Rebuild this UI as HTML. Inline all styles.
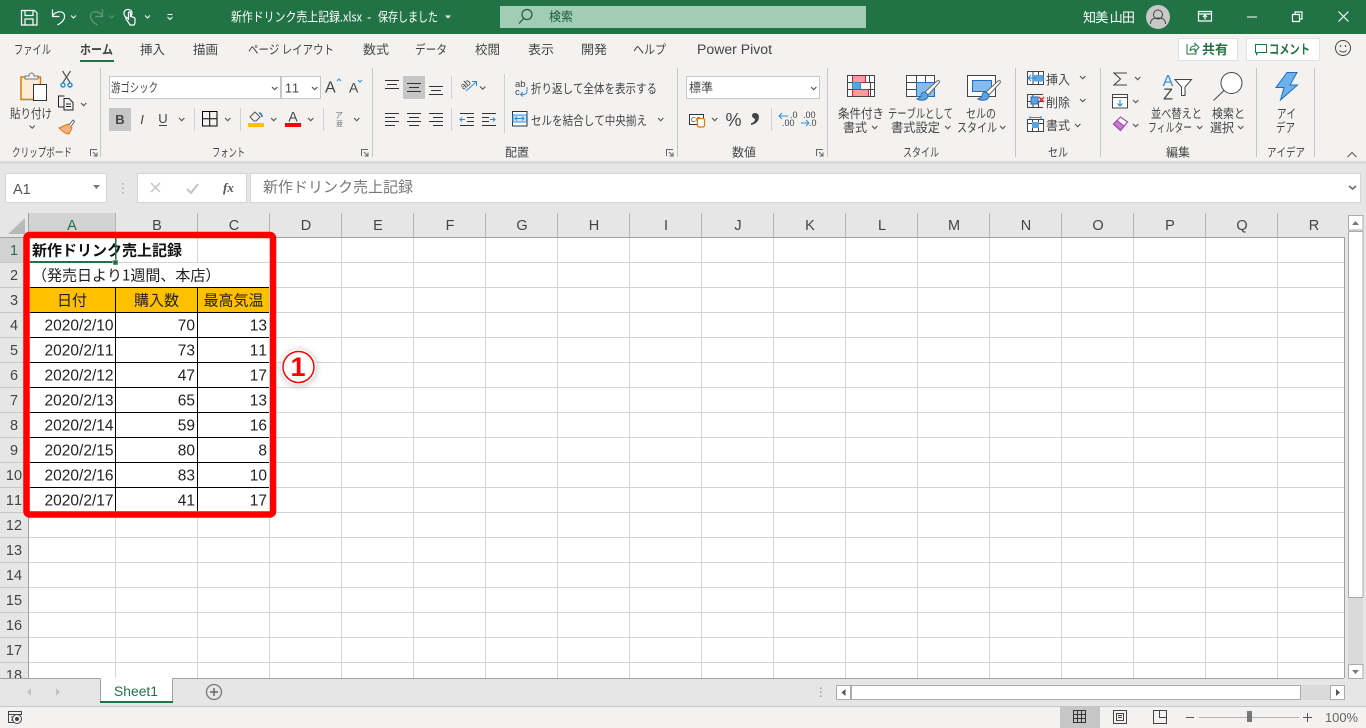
<!DOCTYPE html>
<html lang="ja"><head><meta charset="utf-8"><title>新作ドリンク売上記録.xlsx - Excel</title>
<style>
html,body{margin:0;padding:0;width:1366px;height:728px;overflow:hidden;background:#fff}
svg{display:block}
text{font-family:"Liberation Sans","Noto Sans CJK JP",sans-serif;fill:#444;font-size:12px;font-kerning:none}
.j{font-family:"Noto Sans CJK JP","Liberation Sans",sans-serif;font-size:12.5px}
.w{fill:#fff}
.c{font-family:"Noto Sans CJK JP","Liberation Sans",sans-serif;font-size:15px;fill:#222}
.n{font-size:15.5px;fill:#222;text-anchor:end}
.h{font-size:14.5px;fill:#444;text-anchor:middle}
.g{font-size:12px}
.s{fill:none;stroke:#444;stroke-width:1}
.wh{fill:none;stroke:#fff;stroke-width:1.2}
</style></head><body>
<svg xmlns="http://www.w3.org/2000/svg" width="1366" height="728" viewBox="0 0 1366 728">
<defs>
<path id="ch" d="M0 0l2.700 2.700L5.400 0" fill="none" stroke="#555" stroke-width="1.100"/>
<path id="dl" d="M.5 7V.5H7M3 3l3.500 3.500M3.500 7H7V3.500" fill="none" stroke="#666" stroke-width="1"/>
<g id="br"><path d="M19 0c2-1 3 0 2 2L10 14l-3-3z" fill="#fff" stroke="#666"/><path d="M7 11c-3 0-4 2-4 4-1 2-2 2-4 3 4 2 11 2 11-4z" fill="#5AA5E0" stroke="#2A6DB0"/></g>
</defs>

<!-- base -->
<rect width="1366" height="728" fill="#e6e6e6"/>
<rect width="1366" height="34" fill="#217346"/>
<rect y="34" width="1366" height="127" fill="#f3f2f1"/>
<rect y="161" width="1366" height="3" fill="#dcdcdc"/>

<!-- title bar -->
<path class="wh" d="M21.500 10.500h13l2.500 2.500v12H21.500zM25 10.500v5h8v-5M25 24.500V19h8v5.500"/>
<path class="wh" d="M52.500 9.500v7h7M52.500 16c3-5 11-6 12-.5.6 4-3 7.500-7 9.500"/>
<path d="M71 15.500l2.500 2.500 2.500-2.500" fill="none" stroke="#fff"/>
<path fill="none" stroke="#5E9A78" stroke-width="1.300" d="M102.500 9.500v7h-7M102.500 16c-3-5-11-6-12-.5-.6 4 3 7.500 7 9.500"/>
<path d="M109 15.500l2.500 2.500 2.500-2.500" fill="none" stroke="#5E9A78"/>
<path class="wh" d="M127 18c-2-1-3-2.500-3-5 0-2 1.500-3.500 4-3.500s4 1.500 4 3.500c0 1-.3 2-1 3M127.500 21l-1.500-2c-.7-1 .6-2 1.500-1l1 1v-6c0-1.500 2-1.500 2 0v3.500l3 .7c1 .3 1.500 1 1.500 2V23l-1 2h-4z"/>
<path d="M145 15.500l2.500 2.500 2.500-2.500" fill="none" stroke="#fff"/>
<path d="M167.500 14.500h5M167.500 17l2.500 2.500 2.500-2.500" fill="none" stroke="#fff"/>
<text class="j w" x="231" y="21.500" textLength="131" lengthAdjust="spacingAndGlyphs" style="font-size:13px">新作ドリンク売上記録.xlsx</text>
<text class="w" x="367" y="21.500" style="font-size:13px">-</text>
<text class="j w" x="378" y="21.500" textLength="60" lengthAdjust="spacingAndGlyphs" style="font-size:13px">保存しました</text>
<path d="M445 15.500h6l-3 3z" fill="#fff"/>
<rect x="500" y="6" width="366" height="22" fill="#a0cdb4"/>
<circle cx="527" cy="14.500" r="5" fill="none" stroke="#1E5C3A" stroke-width="1.200"/><path d="M523.500 18.500l-4.500 5" stroke="#1E5C3A" stroke-width="1.200"/>
<text class="j" x="549" y="21" style="fill:#1E5C3A" textLength="24" lengthAdjust="spacingAndGlyphs">検索</text>
<text class="j w" x="1083" y="22" style="font-size:13px" textLength="52" xml:space="preserve">知美 山田</text>
<circle cx="1158" cy="17" r="12" fill="#c8c8c8"/>
<circle cx="1158" cy="14.500" r="4.500" fill="none" stroke="#444"/><path d="M1150.500 24c0-5 3-6 7.500-6s7.500 1 7.500 6" fill="none" stroke="#444"/>
<path class="wh" d="M1198.500 11.500h13v9.500h-13zM1198.500 14h13M1205 19.500v-4M1203 17l2-2 2 2"/>
<path d="M1247 17h10" stroke="#fff"/>
<path class="wh" d="M1292.500 14.500h7v7h-7zM1295 14.500v-2.500h7v7h-2.500"/>
<path d="M1338.500 11.500l10 10M1348.500 11.500l-10 10" stroke="#fff" stroke-width="1.200"/>

<!-- tabs -->
<text class="j" x="14" y="54" textLength="37" lengthAdjust="spacingAndGlyphs">ファイル</text>
<text class="j" x="80" y="54" style="font-weight:700" textLength="33" lengthAdjust="spacingAndGlyphs">ホーム</text>
<text class="j" x="140" y="54" textLength="25" lengthAdjust="spacingAndGlyphs">挿入</text>
<text class="j" x="193" y="54" textLength="25" lengthAdjust="spacingAndGlyphs">描画</text>
<text class="j" x="248" y="54" textLength="86" lengthAdjust="spacingAndGlyphs">ページ レイアウト</text>
<text class="j" x="363" y="54" textLength="26" lengthAdjust="spacingAndGlyphs">数式</text>
<text class="j" x="415" y="54" textLength="32" lengthAdjust="spacingAndGlyphs">データ</text>
<text class="j" x="475" y="54" textLength="25" lengthAdjust="spacingAndGlyphs">校閲</text>
<text class="j" x="528" y="54" textLength="26" lengthAdjust="spacingAndGlyphs">表示</text>
<text class="j" x="581" y="54" textLength="26" lengthAdjust="spacingAndGlyphs">開発</text>
<text class="j" x="633" y="54" textLength="33" lengthAdjust="spacingAndGlyphs">ヘルプ</text>
<text x="697" y="54" style="font-size:13.500px" textLength="75" lengthAdjust="spacingAndGlyphs">Power Pivot</text>
<rect x="80" y="60" width="34" height="2" fill="#217346"/>
<rect x="1178.500" y="38.500" width="59" height="22" fill="#fff" stroke="#e3e3e3"/>
<path d="M1187 44v10h9v-3M1190 51c0-4 2-5 5-5v-2.500l4 4-4 4V49c-2 0-4 0-5 2z" fill="none" stroke="#217346"/>
<text class="j" x="1202" y="54" style="font-size:13px;font-weight:700;fill:#217346" textLength="26" lengthAdjust="spacingAndGlyphs">共有</text>
<rect x="1246.500" y="38.500" width="73" height="22" fill="#fff" stroke="#e3e3e3"/>
<path d="M1255.500 44.500h11v8h-8.500l-1.500 2v-2h-1z" fill="none" stroke="#217346"/>
<text class="j" x="1269" y="54" style="font-size:13px;font-weight:700;fill:#217346" textLength="41" lengthAdjust="spacingAndGlyphs">コメント</text>
<circle cx="1343" cy="48" r="7.500" fill="none" stroke="#444"/><circle cx="1340.500" cy="46" r=".9" fill="#444"/><circle cx="1345.500" cy="46" r=".9" fill="#444"/><path d="M1339.500 50.500c1.500 2 5.500 2 7 0" fill="none" stroke="#444"/>

<!-- separators -->
<path d="M100.500 68v89M372.500 68v89M677.500 68v89M827.500 68v89M1015.500 68v89M1100.500 68v89M1256.500 68v89M1314.500 68v89" stroke="#c6c6c6"/>
<path d="M194.500 108v23M240.500 108v23M323.500 108v23M451.500 76v23M451.500 108v23M504.500 74v59M771.500 108v23" stroke="#d0d0d0"/>

<!-- group labels -->
<text class="j g" x="12" y="156.500" textLength="60" lengthAdjust="spacingAndGlyphs">クリップボード</text>
<text class="j g" x="212" y="156.500" textLength="33" lengthAdjust="spacingAndGlyphs">フォント</text>
<text class="j g" x="505" y="156.500" textLength="24" lengthAdjust="spacingAndGlyphs">配置</text>
<text class="j g" x="732" y="156.500" textLength="24" lengthAdjust="spacingAndGlyphs">数値</text>
<text class="j g" x="903" y="156.500" textLength="36" lengthAdjust="spacingAndGlyphs">スタイル</text>
<text class="j g" x="1048" y="156.500" textLength="20" lengthAdjust="spacingAndGlyphs">セル</text>
<text class="j g" x="1166" y="156.500" textLength="24" lengthAdjust="spacingAndGlyphs">編集</text>
<text class="j g" x="1267" y="156.500" textLength="38" lengthAdjust="spacingAndGlyphs">アイデア</text>
<use href="#dl" x="90" y="149"/><use href="#dl" x="361" y="149"/><use href="#dl" x="666" y="149"/><use href="#dl" x="816" y="149"/>
<path d="M1347.500 157l4.500-4.500 4.500 4.500" fill="none" stroke="#555"/>

<!-- clipboard -->
<path d="M21 77h19.500v22.500H21z" fill="#FCEBD6" stroke="#E07B00" stroke-width="1.500"/>
<path d="M25 79v-3h4c0-4 5-4 5 0h4v3z" fill="#f3f2f1" stroke="#777"/>
<rect x="33.500" y="84.500" width="13" height="16" fill="#fff" stroke="#333"/>
<text class="j" x="10" y="118" textLength="42" lengthAdjust="spacingAndGlyphs">貼り付け</text>
<use href="#ch" x="29.500" y="125.500"/>
<path d="M62.500 71l7.500 11.500M70.500 71L63 82.500" stroke="#555" stroke-width="1.200"/><circle cx="63" cy="85" r="2" fill="none" stroke="#2E8FD8" stroke-width="1.500"/><circle cx="70" cy="85" r="2" fill="none" stroke="#2E8FD8" stroke-width="1.500"/>
<path d="M63.500 107h-5V96h6M64 98.500h5l4 4v7.500h-9zM66 104h5M66 106.500h5" fill="none" stroke="#222"/>
<use href="#ch" x="81" y="103"/>
<path d="M59 128l9-4 4 4-3 6c-3 0-7-3-10-6z" fill="#F4B183" stroke="#E07B00"/>
<path d="M69 125l4-5 1.500 1.500-3.500 5" fill="#fff" stroke="#666"/>

<!-- font -->
<rect x="109.500" y="76.500" width="171" height="22" fill="#fff" stroke="#c6c6c6"/>
<rect x="281.500" y="76.500" width="39" height="22" fill="#fff" stroke="#c6c6c6"/>
<text class="j" x="111" y="92" textLength="47" lengthAdjust="spacingAndGlyphs">游ゴシック</text>
<use href="#ch" x="272" y="87"/>
<text x="285" y="92.500" style="font-size:12.500px">11</text>
<use href="#ch" x="312" y="87"/>
<text x="325" y="92.500" style="font-size:16px">A</text><path d="M337 81l2-2 2 2" fill="none" stroke="#2E8FD8"/>
<text x="349" y="92.500" style="font-size:14px">A</text><path d="M358 80l2 2 2-2" fill="none" stroke="#2E8FD8"/>
<rect x="109" y="108" width="22" height="23" fill="#c6c6c6"/>
<text x="120" y="124" text-anchor="middle" style="font-size:13px;font-weight:700">B</text>
<text x="142" y="124" text-anchor="middle" style="font-size:13px;font-style:italic">I</text>
<text x="163" y="123" text-anchor="middle" style="font-size:13px">U</text><path d="M159 125.500h8" stroke="#444"/>
<use href="#ch" x="179" y="118"/>
<path d="M202.500 111.500h14.500v14.500h-14.500zM209.700 111.500V126M202.500 118.700H217" fill="none" stroke="#000"/>
<use href="#ch" x="225" y="118"/>
<path d="M250 117l5-5 5 5-4 4-2 0z" fill="none" stroke="#555"/><path d="M259 113c2 0 3 2 3 4" fill="none" stroke="#2A6DB0" stroke-width="1.500"/>
<rect x="248" y="123" width="16" height="4" fill="#FFC000"/>
<use href="#ch" x="271" y="118"/>
<text x="293" y="121.500" text-anchor="middle" style="font-size:14px">A</text>
<rect x="285" y="123" width="16" height="4" fill="#f00"/>
<use href="#ch" x="308" y="118"/>
<text class="j" x="335" y="118" style="font-size:8px;fill:#777">ア</text><text class="j" x="336" y="126" style="font-size:7px;fill:#777">亜</text>
<use href="#ch" x="354" y="118"/>

<!-- alignment -->
<rect x="403" y="76" width="22" height="23" fill="#c6c6c6"/>
<path d="M385 80.500h14M387 84.500h10M385 88.500h14M407 83.500h14M409 87.500h10M407 91.500h14M429 86.500h14M431 90.500h10M429 94.500h14" stroke="#333"/>
<path d="M385 113.500h14M385 117.500h10M385 121.500h14M385 125.500h10M407 113.500h14M409 117.500h10M407 121.500h14M409 125.500h10M429 113.500h14M433 117.500h10M429 121.500h14M433 125.500h10" stroke="#333"/>
<text x="460" y="87" transform="rotate(-40 466 84)" style="font-size:9.500px">ab</text><path d="M466 91l10-9M472 81.500h4.500V86" fill="none" stroke="#2E8FD8"/>
<use href="#ch" x="480" y="86.500"/>
<path d="M460 113.500h14M460 125.500h14M467 117.500h7M467 121.500h7M482 113.500h14M482 125.500h14M482 117.500h7M482 121.500h7" fill="none" stroke="#333"/>
<path d="M460 119.500h5M462 117.500l-2 2 2 2M490 119.500h5M493 117.500l2 2-2 2" fill="none" stroke="#2E8FD8"/>
<text x="515" y="87" style="font-size:9.500px">ab</text><text x="515" y="95" style="font-size:9.500px">c</text>
<path d="M527 87v4c0 3-2 3.500-4 3.500h-2M523 92l-2.500 2.500 2.500 2" fill="none" stroke="#2E8FD8"/>
<text class="j" x="531" y="93" textLength="126" lengthAdjust="spacingAndGlyphs">折り返して全体を表示する</text>
<rect x="512.500" y="111.500" width="14.500" height="14.500" fill="#fff" stroke="#333"/><rect x="513" y="115" width="13.500" height="7" fill="#cfe5f6" stroke="#2E8FD8"/>
<path d="M515 118.500h9M517 116.500l-2 2 2 2M522 116.500l2 2-2 2" fill="none" stroke="#2E8FD8"/>
<text class="j" x="531" y="125" textLength="116" lengthAdjust="spacingAndGlyphs">セルを結合して中央揃え</text>
<use href="#ch" x="658" y="118"/>

<!-- number -->
<rect x="686.500" y="76.500" width="133" height="22" fill="#fff" stroke="#c6c6c6"/>
<text class="j" x="689" y="92" textLength="24" lengthAdjust="spacingAndGlyphs">標準</text>
<use href="#ch" x="811" y="87"/>
<rect x="689.500" y="114.500" width="14" height="10" fill="#fff" stroke="#333"/><text x="691" y="122" style="font-size:7px">CC</text>
<rect x="697.500" y="118.500" width="7" height="8.500" rx="1.500" fill="#fff" stroke="#E07B00" stroke-width="1.200"/>
<use href="#ch" x="712" y="118"/>
<text x="725.500" y="126" style="font-size:18px">%</text>
<text x="750.500" y="119" style="font-size:40px;font-weight:700;font-family:'Liberation Serif',serif">,</text>
<path d="M779 116h9M782 113l-3 3 3 3" fill="none" stroke="#2E8FD8"/>
<text x="790" y="118" style="font-size:9px">.0</text><text x="782" y="126" style="font-size:9px">.00</text>
<text x="803" y="118" style="font-size:9px">.00</text><text x="809" y="126" style="font-size:9px">.0</text>
<path d="M801 123h8M806 120l3 3-3 3" fill="none" stroke="#2E8FD8"/>

<!-- styles -->
<rect x="847.500" y="75.500" width="27" height="21" fill="#fff"/>
<rect x="852.500" y="75.500" width="13" height="7" fill="#FF9AA2" stroke="#e01f26"/>
<rect x="852.500" y="82.500" width="8" height="7" fill="#5AA5E0" stroke="#2E8FD8"/>
<rect x="852.500" y="89.500" width="16" height="7" fill="#FF9AA2" stroke="#e01f26"/>
<path class="s" d="M847.500 75.500h27v21h-27zM847.500 82.500h5M847.500 89.500h5M865.500 82.500h9M868.500 89.500h6M869.500 75.500v7M870.500 82.500v14"/>
<text class="j" x="838" y="118" textLength="46" lengthAdjust="spacingAndGlyphs">条件付き</text>
<text class="j" x="843" y="132" textLength="24" lengthAdjust="spacingAndGlyphs">書式</text><use href="#ch" x="872" y="126"/>
<rect x="906.500" y="75.500" width="28" height="21" fill="#fff" stroke="#444"/>
<path class="s" d="M906.500 82.500h28M906.500 89.500h28M916.500 75.500v21M925.500 75.500v21"/>
<rect x="916.500" y="82.500" width="18" height="14" fill="#85BCEB" stroke="#1F6FC0"/>
<use href="#br" x="918" y="81"/>
<text class="j" x="888" y="118" textLength="65" lengthAdjust="spacingAndGlyphs">テーブルとして</text>
<text class="j" x="891" y="132" textLength="49" lengthAdjust="spacingAndGlyphs">書式設定</text><use href="#ch" x="945" y="126"/>
<rect x="967.500" y="75.500" width="28" height="21" fill="#fff" stroke="#444"/>
<rect x="972.500" y="80.500" width="19" height="11" fill="#85BCEB" stroke="#1F6FC0"/>
<use href="#br" x="979" y="81"/>
<text class="j" x="966" y="118" textLength="30" lengthAdjust="spacingAndGlyphs">セルの</text>
<text class="j" x="957" y="132" textLength="40" lengthAdjust="spacingAndGlyphs">スタイル</text><use href="#ch" x="1000" y="126"/>

<!-- cells -->
<rect x="1027.500" y="71.500" width="16" height="13" fill="#fff" stroke="#444"/><path class="s" d="M1027.500 78h16M1033 71.500v13M1038.500 71.500v13"/>
<rect x="1033" y="75" width="10.500" height="6.500" fill="#5AA5E0"/><path d="M1036 78h-8M1031 75l-3 3 3 3" fill="none" stroke="#2E8FD8" stroke-width="1.200"/>
<text class="j" x="1046" y="84" textLength="24" lengthAdjust="spacingAndGlyphs">挿入</text><use href="#ch" x="1080" y="76"/>
<path class="s" d="M1027 94.500h16M1027 101.500h16M1027 107.500h16M1033 94.500v13M1038.500 101.500v6M1027.500 94.500v13"/>
<rect x="1031" y="97" width="7" height="7" fill="#5AA5E0" stroke="#1F6FC0"/><path d="M1039 97l5 5M1044 97l-5 5" stroke="#e01f26" stroke-width="1.300"/>
<text class="j" x="1046" y="107" textLength="24" lengthAdjust="spacingAndGlyphs">削除</text><use href="#ch" x="1080" y="99"/>
<rect x="1027.500" y="119.500" width="16" height="12" fill="#fff" stroke="#444"/><path class="s" d="M1027.500 123.500h16M1032.500 119.500v12M1038.500 119.500v12"/>
<rect x="1032" y="122" width="7" height="6" fill="#5AA5E0"/><path d="M1030 117.500h11M1030 116v3M1041 116v3" stroke="#2E8FD8" fill="none"/>
<text class="j" x="1046" y="130" textLength="24" lengthAdjust="spacingAndGlyphs">書式</text><use href="#ch" x="1075" y="124"/>

<!-- editing -->
<path d="M1127 73h-13l6.500 6-6.500 6h13" fill="none" stroke="#444" stroke-width="1.100"/><use href="#ch" x="1135" y="77"/>
<rect x="1112.500" y="94.500" width="15" height="13.500" fill="#fff" stroke="#444"/><path d="M1112.500 97.500h15" stroke="#444"/><path d="M1120 100v6M1117.500 103.500l2.500 2.500 2.500-2.500" fill="none" stroke="#2E8FD8" stroke-width="1.200"/><use href="#ch" x="1133" y="100"/>
<path d="M1113.500 124l7-7 7 5-7 8.500z" fill="#fff" stroke="#A64AB0" stroke-width="1.200"/><path d="M1113.500 124l3.500-3.500 7 5.500-3.500 4.500z" fill="#C77BD1" stroke="#A64AB0" stroke-width="1.200"/><use href="#ch" x="1133" y="124"/>
<text x="1168" y="86" text-anchor="middle" style="font-size:16px;fill:#2E8FD8">A</text>
<text x="1168" y="99.500" text-anchor="middle" style="font-size:16px">Z</text>
<path d="M1175 79.500h16.500l-6.500 7.500v8.500h-3.500V87z" fill="#fff" stroke="#444"/>
<circle cx="1231.500" cy="83" r="10.500" fill="#fff" stroke="#444"/><path d="M1224 90.500l-10.500 10" stroke="#444"/>
<text class="j" x="1151" y="118" textLength="51" lengthAdjust="spacingAndGlyphs">並べ替えと</text>
<text class="j" x="1148" y="132" textLength="44" lengthAdjust="spacingAndGlyphs">フィルター</text><use href="#ch" x="1197" y="126"/>
<text class="j" x="1212" y="118" textLength="33" lengthAdjust="spacingAndGlyphs">検索と</text>
<text class="j" x="1210" y="132" textLength="24" lengthAdjust="spacingAndGlyphs">選択</text><use href="#ch" x="1238" y="126"/>
<path d="M1287 72.500h10l-7 12.500h7.500l-17 15 3.500-12.500h-8z" fill="#6DB2EC" stroke="#1F6FC0"/>
<text class="j" x="1277" y="118" textLength="19" lengthAdjust="spacingAndGlyphs">アイ</text>
<text class="j" x="1276" y="132" textLength="19" lengthAdjust="spacingAndGlyphs">デア</text>

<!-- formula bar -->
<rect x="5.500" y="173.500" width="101" height="29" fill="#fff" stroke="#d4d4d4"/>
<text x="13" y="194" style="font-size:14.500px;fill:#555">A1</text>
<path d="M93 185h7l-3.500 4z" fill="#777"/>
<path d="M122 183h1.500v1.500H122zM122 187.500h1.500v1.500H122zM122 192h1.500v1.500H122z" fill="#aaa"/>
<rect x="137.500" y="173.500" width="109" height="29" fill="#fff" stroke="#d4d4d4"/>
<path d="M151 183l9 9M160 183l-9 9" stroke="#c4c4c4" stroke-width="1.500"/>
<path d="M187 189l4 4 7-9" fill="none" stroke="#c4c4c4" stroke-width="2"/>
<text x="223" y="192" style="font-family:'Liberation Serif',serif;font-style:italic;font-weight:700;font-size:13px;fill:#555">fx</text>
<rect x="250.500" y="173.500" width="1110" height="29" fill="#fff" stroke="#d4d4d4"/>
<text class="j" x="263" y="192" style="font-size:15px;fill:#777">新作ドリンク売上記録</text>
<path d="M1349 186l3.500 3 3.500-3" fill="none" stroke="#666" stroke-width="1.500"/>

<!-- sheet grid -->
<rect x="29" y="238" width="1315" height="440" fill="#fff"/>
<rect x="29" y="213" width="87" height="24" fill="#d2d2d2"/>
<rect x="0" y="238" width="28" height="24" fill="#d2d2d2"/>
<path d="M25 218v16H8z" fill="#b9b9b9"/>
<path d="M115.500 213v24M197.500 213v24M269.500 213v24M341.500 213v24M413.500 213v24M485.500 213v24M557.500 213v24M629.500 213v24M701.500 213v24M773.500 213v24M845.500 213v24M917.500 213v24M989.500 213v24M1061.500 213v24M1133.500 213v24M1205.500 213v24M1277.500 213v24" stroke="#b4b4b4"/>
<path d="M115.500 238V678M197.500 238V678M269.500 238V678M341.500 238V678M413.500 238V678M485.500 238V678M557.500 238V678M629.500 238V678M701.500 238V678M773.500 238V678M845.500 238V678M917.500 238V678M989.500 238V678M1061.500 238V678M1133.500 238V678M1205.500 238V678M1277.500 238V678" stroke="#d4d4d4"/>
<path d="M29 262.500H1344M29 287.500H1344M29 312.500H1344M29 337.500H1344M29 362.500H1344M29 387.500H1344M29 412.500H1344M29 437.500H1344M29 462.500H1344M29 487.500H1344M29 512.500H1344M29 537.500H1344M29 562.500H1344M29 587.500H1344M29 612.500H1344M29 637.500H1344M29 662.500H1344" stroke="#d4d4d4"/>
<path d="M0 262.500H28M0 287.500H28M0 312.500H28M0 337.500H28M0 362.500H28M0 387.500H28M0 412.500H28M0 437.500H28M0 462.500H28M0 487.500H28M0 512.500H28M0 537.500H28M0 562.500H28M0 587.500H28M0 612.500H28M0 637.500H28M0 662.500H28" stroke="#c8c8c8"/>
<path d="M28.500 213V678M0 237.500H1344M1344.500 237V678" stroke="#a0a0a0"/>

<text class="h" x="72" y="230" style="fill:#217346">A</text>
<text class="h" x="157" y="230">B</text><text class="h" x="234" y="230">C</text><text class="h" x="306" y="230">D</text><text class="h" x="378" y="230">E</text><text class="h" x="450" y="230">F</text><text class="h" x="522" y="230">G</text><text class="h" x="594" y="230">H</text><text class="h" x="666" y="230">I</text><text class="h" x="738" y="230">J</text><text class="h" x="810" y="230">K</text><text class="h" x="882" y="230">L</text><text class="h" x="954" y="230">M</text><text class="h" x="1026" y="230">N</text><text class="h" x="1098" y="230">O</text><text class="h" x="1170" y="230">P</text><text class="h" x="1242" y="230">Q</text><text class="h" x="1314" y="230">R</text>

<text class="h" x="14" y="255" style="fill:#217346">1</text>
<text class="h" x="14" y="280">2</text><text class="h" x="14" y="305">3</text><text class="h" x="14" y="330">4</text><text class="h" x="14" y="355">5</text><text class="h" x="14" y="380">6</text><text class="h" x="14" y="405">7</text><text class="h" x="14" y="430">8</text><text class="h" x="14" y="455">9</text><text class="h" x="14" y="480">10</text><text class="h" x="14" y="505">11</text><text class="h" x="14" y="530">12</text><text class="h" x="14" y="555">13</text><text class="h" x="14" y="580">14</text><text class="h" x="14" y="605">15</text><text class="h" x="14" y="630">16</text><text class="h" x="14" y="655">17</text><text class="h" x="14" y="680">18</text>

<!-- table -->
<rect x="30" y="238" width="240" height="273" fill="#fff"/>
<rect x="30" y="288" width="239" height="24" fill="#FFC000"/>
<path d="M116 262.500H269M197.500 238V262" stroke="#d4d4d4"/>
<path d="M30 287.500H269M30 312.500H269M30 337.500H269M30 362.500H269M30 387.500H269M30 412.500H269M30 437.500H269M30 462.500H269M30 487.500H269M115.500 287V511M197.500 287V511" stroke="#000"/>
<text class="c" x="32" y="255.500" style="font-weight:700;fill:#111">新作ドリンク売上記録</text>
<text class="c" x="32" y="280.500">（発売日より1週間、本店）</text>
<text class="c" x="72" y="305.500" text-anchor="middle">日付</text>
<text class="c" x="156.500" y="305.500" text-anchor="middle">購入数</text>
<text class="c" x="233.500" y="305.500" text-anchor="middle">最高気温</text>
<text class="n" x="113.500" y="330.500">2020/2/10</text><text class="n" x="195" y="330.500">70</text><text class="n" x="267" y="330.500">13</text>
<text class="n" x="113.500" y="355.500">2020/2/11</text><text class="n" x="195" y="355.500">73</text><text class="n" x="267" y="355.500">11</text>
<text class="n" x="113.500" y="380.500">2020/2/12</text><text class="n" x="195" y="380.500">47</text><text class="n" x="267" y="380.500">17</text>
<text class="n" x="113.500" y="405.500">2020/2/13</text><text class="n" x="195" y="405.500">65</text><text class="n" x="267" y="405.500">13</text>
<text class="n" x="113.500" y="430.500">2020/2/14</text><text class="n" x="195" y="430.500">59</text><text class="n" x="267" y="430.500">16</text>
<text class="n" x="113.500" y="455.500">2020/2/15</text><text class="n" x="195" y="455.500">80</text><text class="n" x="267" y="455.500">8</text>
<text class="n" x="113.500" y="480.500">2020/2/16</text><text class="n" x="195" y="480.500">83</text><text class="n" x="267" y="480.500">10</text>
<text class="n" x="113.500" y="505.500">2020/2/17</text><text class="n" x="195" y="505.500">41</text><text class="n" x="267" y="505.500">17</text>
<!-- selection -->
<rect x="30" y="261" width="85" height="2" fill="#217346"/>
<rect x="115" y="238" width="1.500" height="23" fill="#217346"/>
<rect x="113" y="260" width="5" height="5" fill="#217346" stroke="#fff" stroke-width=".5"/>
<!-- red frame -->
<rect x="26.500" y="235" width="246.500" height="279.500" rx="3" fill="none" stroke="#f00" stroke-width="6.500"/>
<!-- number badge -->
<filter id="hl" x="-40%" y="-40%" width="180%" height="180%"><feGaussianBlur stdDeviation="2.500"/></filter>
<circle cx="299" cy="368" r="20" fill="#bbb" opacity=".45" filter="url(#hl)"/>
<circle cx="298.500" cy="367" r="17.500" fill="#fff"/>
<circle cx="298.500" cy="367" r="15.500" fill="#fff" stroke="#f00" stroke-width="1.500"/>
<text x="298" y="376" text-anchor="middle" style="font-size:27px;font-weight:700;fill:#f00">1</text>

<!-- v scrollbar -->
<rect x="1345" y="213" width="21" height="466" fill="#e6e6e6"/>
<rect x="1348.500" y="215.500" width="14.500" height="14.500" fill="#fff" stroke="#ababab"/><path d="M1352 225l3.500-4 3.500 4z" fill="#777"/>
<rect x="1348.500" y="231.500" width="14.500" height="366" fill="#fff" stroke="#ababab"/>
<rect x="1348" y="598" width="15" height="66" fill="#dadada"/>
<rect x="1348.500" y="664.500" width="14.500" height="14" fill="#fff" stroke="#ababab"/><path d="M1352 670l3.500 4 3.500-4z" fill="#777"/>

<!-- tab bar -->
<rect x="0" y="679" width="1366" height="27" fill="#e6e6e6"/>
<path d="M0 678.500H1344" stroke="#a0a0a0"/>
<path d="M31 688l-4 4 4 4zM56 688l4 4-4 4z" fill="#c4c4c4"/>
<rect x="100.500" y="678" width="72" height="24" fill="#fff"/>
<path d="M100.500 679v23M172.500 679v23" stroke="#a0a0a0"/>
<rect x="100" y="701" width="73" height="2" fill="#217346"/>
<text x="114" y="696" style="font-size:13.500px;fill:#217346" textLength="44" lengthAdjust="spacingAndGlyphs">Sheet1</text>
<circle cx="214" cy="692" r="7.500" fill="none" stroke="#777" stroke-width="1.300"/><path d="M210 692h8M214 688v8" stroke="#666" stroke-width="1.500"/>
<path d="M820 687.500h1.500v1.500H820zM820 691.500h1.500v1.500H820zM820 695.500h1.500v1.500H820z" fill="#999"/>
<rect x="836.500" y="685.500" width="14" height="14" fill="#fff" stroke="#ababab"/><path d="M845.500 689l-4 3.500 4 3.500z" fill="#555"/>
<rect x="851.500" y="685.500" width="449" height="14" fill="#fff" stroke="#ababab"/>
<rect x="1301" y="685" width="29" height="15" fill="#dadada"/>
<rect x="1330.500" y="685.500" width="14" height="14" fill="#fff" stroke="#ababab"/><path d="M1336 689l4 3.500-4 3.500z" fill="#555"/>

<!-- status bar -->
<rect x="0" y="706" width="1366" height="22" fill="#f3f2f1"/>
<path d="M0 706.500H1366" stroke="#c6c6c6"/>
<path class="s" d="M8.500 711.500h13v3h-13zM8.500 714.500v8h5M11 717h3M11 720h2"/><circle cx="17" cy="719" r="4.500" fill="#f3f2f1" stroke="#444"/><circle cx="17" cy="719" r="2" fill="#444"/>
<rect x="1060" y="707" width="40" height="21" fill="#c6c6c6"/>
<path d="M1073.500 710.500h12v12h-12zM1073.500 714.500h12M1073.500 718.500h12M1077.500 710.500v12M1081.500 710.500v12" fill="none" stroke="#333"/>
<path class="s" d="M1113.500 710.500h13v13h-13zM1116.500 713.500h7v7h-7zM1118 715.500h4M1118 717.500h4"/>
<path class="s" d="M1153.500 710.500h13v13h-13zM1159.500 710.500v7h7"/>
<path d="M1186 717.500h8M1303 717.500h9M1307.500 713v9" stroke="#555"/>
<path d="M1199 717.500h100" stroke="#b4b4b4"/>
<rect x="1247" y="711" width="5" height="11" fill="#777"/>
<text x="1325" y="722" style="font-size:12.500px;fill:#666" textLength="33" lengthAdjust="spacingAndGlyphs">100%</text>
</svg>
</body></html>
